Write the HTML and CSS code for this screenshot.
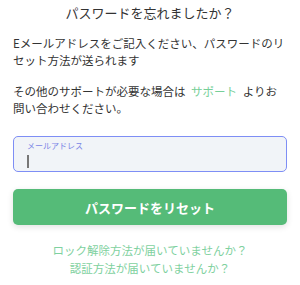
FILE: index.html
```html
<!DOCTYPE html>
<html lang="ja">
<head>
<meta charset="utf-8">
<link rel="stylesheet" href="styles.css">
</head>
<body>
<div class="page">
  <h1 class="title">パスワードを忘れましたか？</h1>
  <p class="text text-first">Eメールアドレスをご記入ください、パスワードのリセット方法が送られます</p>
  <p class="text text-second">その他のサポートが必要な場合は <a class="support">サポート</a> よりお問い合わせください。</p>
  <div class="field">
    <span class="field-label">メールアドレス</span>
    <span class="caret"></span>
  </div>
  <button class="reset">パスワードをリセット</button>
  <div class="links">
    <a class="link">ロック解除方法が届いていませんか？</a>
    <a class="link">認証方法が届いていませんか？</a>
  </div>
</div>
</body>
</html>
```
FILE: styles.css
```css
html, body {
  margin: 0;
  padding: 0;
  background: #ffffff;
}
body {
  font-family: "Noto Sans CJK JP", "Noto Sans", sans-serif;
  color: #333333;
}
.page {
  width: 300px;
  box-sizing: border-box;
  padding: 4px 13px 0;
  display: flex;
  flex-direction: column;
}
.title {
  margin: 0;
  font-size: 13px;
  line-height: 18px;
  font-weight: 400;
  text-align: center;
  color: #333333;
}
.text {
  margin: 0;
  font-size: 11.5px;
  line-height: 17px;
}
.text-first {
  margin-top: 12.5px;
}
.text-second {
  margin-top: 14px;
  word-spacing: 3px;
  padding-right: 8px;
}
.support {
  color: #76cf98;
  text-decoration: none;
}
.field {
  margin-top: 19.5px;
  height: 36px;
  box-sizing: border-box;
  border: 1.5px solid #7e8ef5;
  border-radius: 5px;
  background: #f1f4f8;
  padding: 3px 0 0 13px;
  display: flex;
  flex-direction: column;
  align-items: flex-start;
}
.field-label {
  font-size: 8px;
  line-height: 12px;
  color: #7b86e6;
}
.caret {
  margin-top: 3px;
  width: 1.5px;
  height: 13px;
  background: #777777;
}
.reset {
  margin-top: 17px;
  height: 36px;
  border: none;
  border-radius: 5px;
  background: #55bb78;
  color: #ffffff;
  font-family: "Noto Sans CJK JP", "Noto Sans", sans-serif;
  font-size: 13px;
  font-weight: 700;
  box-shadow: 0 2px 6px rgba(0, 0, 0, 0.12);
  padding: 0;
}
.links {
  margin-top: 16px;
  display: flex;
  flex-direction: column;
  align-items: center;
}
.link {
  font-size: 11.5px;
  line-height: 18px;
  color: #7fd1a0;
  text-decoration: none;
}
```
